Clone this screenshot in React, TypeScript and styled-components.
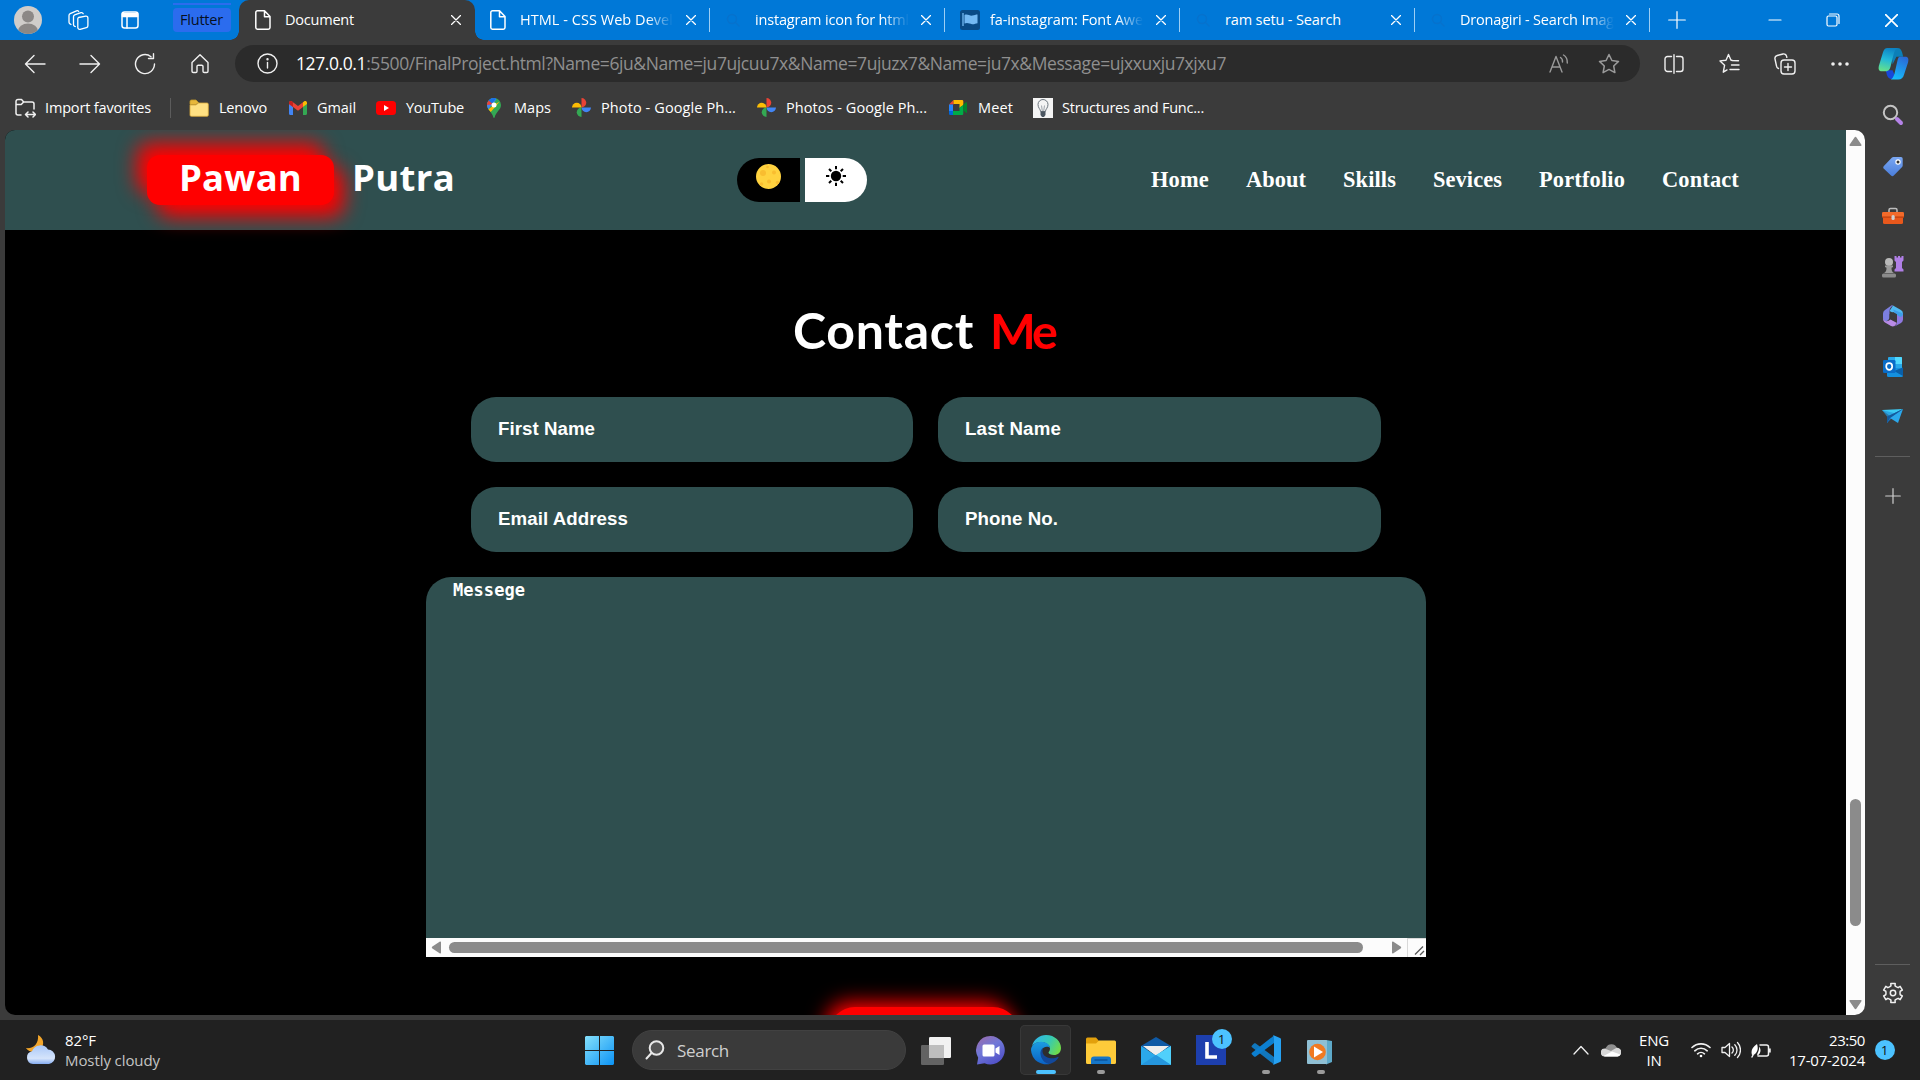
import React, { useLayoutEffect, useRef, useState } from "react";
import styled, { createGlobalStyle, css } from "styled-components";

const UI = `"Open Sans", "Noto Sans", sans-serif`;

const GlobalStyle = createGlobalStyle`
  * { box-sizing: border-box; }
  html, body { margin: 0; padding: 0; background: #3b3b3b; overflow: hidden; }
  svg { display: block; flex: none; }
`;

/* ---------- text fitted to a column width by tracking ---------- */

const FitBox = styled.span<{ $w: number; $size: number; $color?: string; $weight?: number; $font?: string; $ml?: number; $fade?: boolean }>`
  display: block;
  flex: none;
  width: ${(p) => p.$w}px;
  margin-left: ${(p) => p.$ml ?? 0}px;
  font-family: ${(p) => p.$font ?? UI};
  font-size: ${(p) => p.$size}px;
  font-weight: ${(p) => p.$weight ?? 400};
  color: ${(p) => p.$color ?? "#fff"};
  line-height: 20px;
  white-space: nowrap;
  ${(p) =>
    p.$fade &&
    css`
      mask-image: linear-gradient(to right, #000 calc(100% - 26px), transparent);
    `}
`;

type FitProps = {
  text: string;
  w: number;
  size: number;
  color?: string;
  weight?: number;
  font?: string;
  ml?: number;
  fade?: boolean;
  children?: React.ReactNode;
};

function Fit({ text, w, size, color, weight, font, ml, fade, children }: FitProps) {
  const ref = useRef<HTMLSpanElement>(null);
  const [tracking, setTracking] = useState(0);
  useLayoutEffect(() => {
    if (ref.current) {
      const natural = ref.current.getBoundingClientRect().width;
      setTracking((w - natural) / text.length);
    }
  }, [text, w]);
  return (
    <FitBox $w={w} $size={size} $color={color} $weight={weight} $font={font} $ml={ml} $fade={fade}>
      <span ref={ref} style={{ letterSpacing: tracking }}>
        {children ?? text}
      </span>
    </FitBox>
  );
}

/* ---------- shell ---------- */

const Screen = styled.div`
  width: 1920px;
  height: 1080px;
  display: flex;
  flex-direction: column;
  background: #3b3b3b;
  overflow: hidden;
  font-family: ${UI};
  color: #fff;
`;

const Slot = styled.div<{ $w: number }>`
  flex: none;
  width: ${(p) => p.$w}px;
  height: 100%;
  display: flex;
  align-items: center;
  justify-content: center;
`;

/* ---------- tab strip ---------- */

const TabStrip = styled.div`
  height: 40px;
  flex: none;
  display: flex;
  align-items: center;
  background: #0078d7;
`;

const GroupPill = styled.div`
  width: 58px;
  height: 29px;
  margin: 0 8px 5px 13px;
  border-top: 2px solid #2b6cee;
  display: flex;
  align-items: flex-end;
`;

const GroupLabel = styled.div`
  width: 58px;
  height: 24px;
  border-radius: 4px;
  background: #2b6cee;
  padding-left: 7px;
  display: flex;
  align-items: center;
`;

const Tab = styled.div<{ $active?: boolean; $line?: boolean }>`
  width: 235px;
  height: 40px;
  flex: none;
  display: flex;
  align-items: center;
  padding-left: 15px;
  position: relative;
  ${(p) =>
    p.$line &&
    css`
      background: linear-gradient(#9ccef5, #9ccef5) right center / 1px 24px no-repeat;
    `}
  ${(p) =>
    p.$active &&
    css`
      width: 236px;
      padding-left: 16px;
      background: #3b3b3b;
      border-radius: 10px 10px 0 0;
      z-index: 1;
      &::before,
      &::after {
        content: "";
        position: absolute;
        bottom: 0;
        width: 9px;
        height: 9px;
      }
      &::before {
        left: -9px;
        background: radial-gradient(circle at 0 0, transparent 8.5px, #3b3b3b 9px);
      }
      &::after {
        right: -9px;
        background: radial-gradient(circle at 100% 0, transparent 8.5px, #3b3b3b 9px);
      }
    `}
`;

const Favicon = styled.div`
  width: 20px;
  flex: none;
`;

const TabClose = styled.div`
  margin-left: auto;
  margin-right: 14px;
`;

const Spacer = styled.div`
  flex: 1;
`;

const X = ({ s = 10, c = "#fff" }) => (
  <svg width={s} height={s} viewBox="0 0 10 10" stroke={c} strokeWidth="1.3" strokeLinecap="round">
    <path d="M.5.5l9 9M9.5.5l-9 9" />
  </svg>
);

const PageIcon = () => (
  <svg width="16" height="20" viewBox="0 0 16 20" fill="none" stroke="#fff" strokeWidth="1.5" strokeLinejoin="round">
    <path d="M2.5.8h7L15 6.500V17.500a1.700 1.700 0 0 1-1.700 1.700H2.500A1.700 1.700 0 0 1 .8 17.500v-15A1.700 1.700 0 0 1 2.500.8zM9.500 1v5.700H15" />
  </svg>
);

const FaintSearch = () => (
  <svg width="16" height="16" viewBox="0 0 16 16" fill="none" stroke="#0672cd" strokeWidth="1.4">
    <circle cx="7" cy="7" r="4.500" />
    <path d="M10.500 10.500l4 4" />
  </svg>
);

const FlagIcon = () => (
  <svg width="20" height="20" viewBox="0 0 20 20">
    <rect width="20" height="20" rx="2.500" fill="#0a4a86" />
    <path d="M3 3v13" stroke="#74b8f3" strokeWidth="1.300" />
    <path d="M4.500 5c3-1.500 5 1.200 8 .6 2-.3 3-1 5-1v8.600c-2 .2-3 1.200-5.500 1-2.500-.4-4.500-2-7.500-.6z" fill="#74b8f3" />
  </svg>
);

/* ---------- toolbar ---------- */

const Toolbar = styled.div`
  height: 47px;
  flex: none;
  display: flex;
  align-items: center;
  padding-left: 7px;
`;

const Address = styled.div`
  width: 1405px;
  height: 37px;
  margin: 0 6px 0 8px;
  border-radius: 19px;
  background: #2b2b2b;
  display: flex;
  align-items: center;
  padding-left: 22px;
`;

const AddressText = styled.div`
  margin-left: 18px;
  padding-bottom: 2px;
`;

const Host = styled.span`
  color: #fff;
`;

const Line = ({ w = 22, h = 22, d, c = "#f0f0f0", sw = 1.4, children }: any) => (
  <svg width={w} height={h} viewBox={`0 0 ${w} ${h}`} fill="none" stroke={c} strokeWidth={sw} strokeLinecap="round" strokeLinejoin="round">
    {d && <path d={d} />}
    {children}
  </svg>
);

const CopilotIcon = () => (
  <svg width="31" height="33" viewBox="0 0 32 34">
    <defs>
      <linearGradient id="cpA" x1="0.600" y1="0" x2="0.400" y2="1">
        <stop offset="0" stopColor="#0c82c4" />
        <stop offset=".5" stopColor="#22b8d8" />
        <stop offset="1" stopColor="#64e08c" />
      </linearGradient>
      <linearGradient id="cpB" x1="0.700" y1="0" x2="0.300" y2="1">
        <stop offset="0" stopColor="#2a6ad8" />
        <stop offset="1" stopColor="#16bdfb" />
      </linearGradient>
    </defs>
    <path d="M14 1h6c3 0 4 2 5 5l1 4h-7l-4 8z" fill="#0b7fb8" />
    <path d="M8 24h7l4 9h-4c-4 0-5-2-6-5z" fill="#1748d8" />
    <path d="M10 1h10c-2 1-3 3-4 7l-3 12c-1 4-3 5-6 5H4c-3 0-4-2-3-6L5 6c1-3 2-5 5-5z" fill="url(#cpA)" />
    <path d="M23 10h5c3 0 4 2 3 6l-4 12c-1 4-3 5.500-6 5.500h-8c2-1 3-3 4-6l3-13c.700-3 1-4.500 3-4.500z" fill="url(#cpB)" />
  </svg>
);

/* ---------- bookmarks ---------- */

const MainRow = styled.div`
  display: flex;
  height: 933px;
  flex: none;
`;

const LeftColumn = styled.div`
  width: 1865px;
  display: flex;
  flex-direction: column;
  padding-left: 5px;
`;

const Bookmarks = styled.div`
  height: 43px;
  flex: none;
  display: flex;
  align-items: center;
  padding: 0 0 2px 10px;
`;

const Mark = styled.div<{ $w: number }>`
  width: ${(p) => p.$w}px;
  flex: none;
  display: flex;
  align-items: center;
`;

const MarkIcon = styled.div<{ $w: number }>`
  width: ${(p) => p.$w}px;
  flex: none;
`;

const Divider = styled.div`
  width: 1px;
  height: 20px;
  background: #5c5c5c;
  margin-right: 18px;
`;

const ImportIcon = () => (
  <Line w={21} h={20} sw={1.500}>
    <path d="M6 17H3a2 2 0 0 1-2-2V3.500A2 2 0 0 1 3 1.500h3.500l2.200 2.500H17a2 2 0 0 1 2 2V11M1.200 6.500h5l2.200-2.300" />
    <path d="M11 16.500h9M13 14l-2.500 2.500L13 19M18 14l2.500 2.500L18 19" />
  </Line>
);

const FolderSmall = () => (
  <svg width="20" height="18" viewBox="0 0 20 18">
    <path d="M1 2.500A1.500 1.500 0 0 1 2.500 1H7l2.500 2.500-2.500 2H1z" fill="#e8b73a" stroke="#c49a2a" strokeWidth=".8" />
    <path d="M1 6h6l2.500-2H18a1.300 1.300 0 0 1 1.300 1.300V16a1.300 1.300 0 0 1-1.300 1.300H2.300A1.300 1.300 0 0 1 1 16z" fill="#ffe082" stroke="#d9a93b" strokeWidth=".8" />
  </svg>
);

const GmailIcon = () => (
  <svg width="18" height="14" viewBox="0 0 18 14">
    <path d="M0 2.500v10.300c0 .7.500 1.200 1.200 1.200H4V6z" fill="#4285f4" />
    <path d="M18 2.500v10.300c0 .7-.5 1.200-1.200 1.200H14V6z" fill="#34a853" />
    <path d="M14 1.200V6l4-3V1.800C18 .2 16.200-.5 15 .4z" fill="#fbbc04" />
    <path d="M0 1.800V3l4 3 5 3.700L14 6V1.200L9 5 4 1.200 3 .4C1.800-.5 0 .2 0 1.800z" fill="#ea4335" />
    <path d="M0 1.800V3l4 3V1.200L3 .4C1.800-.5 0 .2 0 1.800z" fill="#c5221f" />
  </svg>
);

const YouTubeIcon = () => (
  <svg width="20" height="14" viewBox="0 0 20 14">
    <rect width="20" height="14" rx="3.500" fill="#f00" />
    <path d="M8 4l5 3-5 3z" fill="#fff" />
  </svg>
);

const MapsIcon = () => (
  <svg width="14" height="20" viewBox="0 0 14 20">
    <path d="M7 0a7 7 0 0 0-7 7c0 5 5 6.500 6.300 12.300.2.900 1.200.900 1.400 0C9 13.500 14 12 14 7a7 7 0 0 0-7-7z" fill="#34a853" />
    <path d="M0 7a7 7 0 0 0 1.400 4.200L9.500 1.200 7 0a7 7 0 0 0-7 7z" fill="#4285f4" />
    <path d="M1.700 2.500A7 7 0 0 0 0 7l4.500-.5L6 4z" fill="#ea4335" />
    <path d="M1.400 11.200C2.200 12.300 3 13 3.800 14l8.700-10.300L10 5z" fill="#fbbc04" />
    <path d="M1.700 2.500L5 5.500 9.300.4A7 7 0 0 0 1.700 2.500z" fill="#1a73e8" />
    <circle cx="7" cy="7" r="2.500" fill="#fff" />
  </svg>
);

const PhotosIcon = () => (
  <svg width="19" height="19" viewBox="0 0 18 18">
    <path d="M9 0a4.500 4.500 0 0 1 0 9z" fill="#ea4335" />
    <path d="M18 9a4.500 4.500 0 0 1-9 0z" fill="#4285f4" />
    <path d="M9 18a4.500 4.500 0 0 1 0-9z" fill="#34a853" />
    <path d="M0 9a4.500 4.500 0 0 1 9 0z" fill="#fbbc04" />
  </svg>
);

const MeetIcon = () => (
  <svg width="18" height="15" viewBox="0 0 18 15">
    <path d="M0 4.500L4.500 0v4.500z" fill="#ea4335" />
    <path d="M0 4.500h4v6.500H0z" fill="#2684fc" />
    <path d="M0 11h4v4H1.300A1.300 1.300 0 0 1 0 13.700z" fill="#0066da" />
    <path d="M4.500 0H13a1.300 1.300 0 0 1 1.300 1.300V5L10.500 8V4h-6z" fill="#ffba00" />
    <path d="M4 11h6.500V7.500l3.800-2.500v8.700A1.300 1.300 0 0 1 13 15H4z" fill="#00ac47" />
    <path d="M14.300 4.500L17 2.300c.5-.4 1 0 1 .4v9.600c0 .5-.5.800-1 .4l-2.700-2.200z" fill="#00832d" />
  </svg>
);

const BulbIcon = () => (
  <svg width="20" height="20" viewBox="0 0 20 20">
    <rect width="20" height="20" fill="#f4f4f4" />
    <path d="M7.600 13.500c-.2-2.500-2.600-3.500-2.600-7a5 5 0 0 1 10 0c0 3.500-2.400 4.500-2.600 7z" fill="none" stroke="#6b747d" strokeWidth="1" />
    <path d="M8.500 7.500L9.300 13M11.500 7.500L10.700 13" fill="none" stroke="#8a929a" strokeWidth=".8" />
    <path d="M7.500 13.500h5v3.500L11 19H9l-1.500-2z" fill="#4a5560" />
  </svg>
);

/* ---------- web page ---------- */

const Viewport = styled.div`
  height: 885px;
  flex: none;
  display: flex;
  border-radius: 10px;
  overflow: hidden;
  background: #000;
`;

const Site = styled.div`
  width: 1841px;
  flex: none;
  display: flex;
  flex-direction: column;
  overflow: hidden;
`;

const SiteHeader = styled.header`
  height: 100px;
  flex: none;
  background: #2f4f4f;
  display: flex;
  align-items: flex-start;
  padding-left: 142px;
`;

const LogoBadge = styled.div`
  width: 187px;
  height: 50px;
  margin-top: 25px;
  border-radius: 13px;
  background: #f00;
  box-shadow: -10px -12px 20px #f00, 10px 12px 20px #f00;
  padding: 12px 0 0 32px;
`;

const LogoRest = styled.div`
  width: 103px;
  padding-top: 37px;
  margin-left: 18px;
`;

const Toggle = styled.div`
  display: flex;
  gap: 5px;
  margin: 28px 0 0 282px;
`;

const ToggleHalf = styled.div<{ $light?: boolean }>`
  width: ${(p) => (p.$light ? 62 : 63)}px;
  height: 44px;
  display: flex;
  justify-content: center;
  padding-top: ${(p) => (p.$light ? 8 : 6)}px;
  background: ${(p) => (p.$light ? "#fff" : "#000")};
  border-radius: ${(p) => (p.$light ? "0 22px 22px 0" : "22px 0 0 22px")};
`;

const Nav = styled.nav`
  display: flex;
  margin: 40px 0 0 284px;
`;

const Section = styled.section`
  width: 1000px;
  margin-left: 421px;
  display: flex;
  flex-direction: column;
`;

const Heading = styled.h1`
  margin: 70px 0 0 367px;
  height: 97px;
  display: flex;
  align-items: flex-start;
  padding-top: 20px;
`;

const Fields = styled.div`
  display: grid;
  grid-template-columns: 442px 443px;
  gap: 25px;
  margin-left: 45px;
`;

const Field = styled.div`
  height: 65px;
  border-radius: 25px;
  background: #2f4f4f;
  padding: 22px 0 0 27px;
`;

const MessageBox = styled.div`
  height: 380px;
  margin-top: 25px;
  display: flex;
  flex-direction: column;
  background: #2f4f4f;
  border-radius: 25px 25px 0 0;
`;

const MessageBody = styled.div`
  height: 361px;
  padding: 3px 0 0 27px;
`;

const HScroll = styled.div`
  height: 19px;
  display: flex;
  align-items: center;
  background: #fcfcfc;
  padding-left: 4px;
`;

const HThumb = styled.div`
  width: 914px;
  height: 11px;
  border-radius: 6px;
  background: #8b8b8b;
  margin: 0 27px 0 6px;
`;

const Resizer = styled.div`
  width: 19px;
  height: 19px;
  margin-left: auto;
  border-left: 1px solid #d9d9d9;
  border-top: 1px solid #d9d9d9;
  display: flex;
  align-items: flex-end;
  justify-content: flex-end;
  padding: 0 1px 1px 0;
`;

const Submit = styled.div`
  width: 190px;
  height: 60px;
  margin: 50px 0 0 403px;
  border-radius: 26px;
  background: #f00;
  box-shadow: -6px -8px 20px -3px #f00, 6px 10px 20px -3px #f00;
`;

const VScroll = styled.div`
  width: 19px;
  flex: none;
  background: #fcfcfc;
  display: flex;
  flex-direction: column;
  align-items: center;
  justify-content: space-between;
  padding: 5px 0 4px;
`;

const VThumb = styled.div`
  width: 11px;
  height: 127px;
  border-radius: 6px;
  background: #8b8b8b;
  margin-top: 579px;
`;

const Arrow = ({ r }: { r: number }) => (
  <svg width="13" height="13" viewBox="0 0 13 13">
    <path transform={`rotate(${r} 6.500 6.500)`} d="M6.500 1.800c.4 0 .7.200 1 .6l4.800 7.200c.5.800.2 1.400-.6 1.400H1.300c-.8 0-1.100-.6-.6-1.400l4.800-7.200c.3-.4.600-.6 1-.6z" fill="#8b8b8b" />
  </svg>
);

const Moon = () => (
  <svg width="25" height="25" viewBox="0 0 25 25">
    <circle cx="12.500" cy="12.500" r="12.500" fill="#ffd23f" />
    <g fill="#f9bd30">
      <circle cx="7" cy="9" r="3" />
      <circle cx="18" cy="8.500" r="2" />
      <circle cx="13" cy="17.500" r="2" />
      <circle cx="11.500" cy="3" r="1.300" />
      <circle cx="5.500" cy="20" r="1.800" />
      <circle cx="21.500" cy="18.500" r="1.800" />
    </g>
  </svg>
);

const Sun = () => (
  <svg width="20" height="20" viewBox="0 0 20 20" stroke="#000" strokeWidth="2">
    <circle cx="10" cy="10" r="5.200" stroke="none" />
    <path d="M10 0v3.300M10 16.700V20M0 10h3.300M16.700 10H20M3 3l2.300 2.300M14.700 14.700L17 17M3 17l2.300-2.300M14.700 5.300L17 3" />
  </svg>
);

/* ---------- sidebar ---------- */

const Sidebar = styled.aside`
  width: 55px;
  display: flex;
  flex-direction: column;
  align-items: center;
`;

const SideItem = styled.div<{ $h: number }>`
  width: 100%;
  height: ${(p) => p.$h}px;
  flex: none;
  display: flex;
  align-items: center;
  justify-content: center;
`;

const SideLine = styled.div<{ $mt?: number }>`
  width: 35px;
  height: 1px;
  flex: none;
  background: #5e5e5e;
  margin-top: ${(p) => p.$mt ?? 0}px;
`;

const SideSearch = () => (
  <svg width="22" height="22" viewBox="0 0 22 22" fill="none">
    <circle cx="8.500" cy="8.500" r="6.700" stroke="#c4c4c4" strokeWidth="2" />
    <path d="M15 15l4 4" stroke="#b583e8" strokeWidth="4" strokeLinecap="round" />
  </svg>
);
const TagIcon = () => (
  <svg width="20" height="21" viewBox="0 0 20 21">
    <defs>
      <linearGradient id="tg" x1="0" y1="0" x2="0" y2="1">
        <stop offset="0" stopColor="#7aa7f2" />
        <stop offset="1" stopColor="#4b7edb" />
      </linearGradient>
    </defs>
    <path d="M10.500 1H18a1.700 1.700 0 0 1 1.700 1.700V9.500a2 2 0 0 1-.6 1.400L10.800 19.500a2 2 0 0 1-2.800 0L.9 12.800a2 2 0 0 1 0-2.800L9 1.600A2 2 0 0 1 10.500 1z" fill="url(#tg)" />
    <circle cx="15" cy="6" r="2.700" fill="#fff" />
    <circle cx="15" cy="6" r="1.500" fill="#333" />
  </svg>
);
const ToolsIcon = () => (
  <svg width="22" height="18" viewBox="0 0 22 18">
    <path d="M7 6V3a1.500 1.500 0 0 1 1.500-1.500h5A1.500 1.500 0 0 1 15 3v3" fill="none" stroke="#bdbdbd" strokeWidth="1.500" />
    <path d="M1 9h20v6.500A1.500 1.500 0 0 1 19.500 17h-17A1.500 1.500 0 0 1 1 15.500z" fill="#e8581c" />
    <rect x="0" y="5" width="22" height="5.500" rx="1.200" fill="#f26a2a" />
    <path d="M0 9.500h22v1.200H0z" fill="#b93c0c" />
    <rect x="9.500" y="8" width="3.200" height="5" rx="1.500" fill="#d0d0d0" />
  </svg>
);
const GamesIcon = () => (
  <svg width="22" height="23" viewBox="0 0 22 23">
    <path d="M12.500 1h2v1.500H16V1h2v1.500h1.500V1h2v4.500L20 7v6l1.500 1.500v2h-9v-2L14 13V7l-1.500-1.500z" fill="#b07fe6" />
    <circle cx="7" cy="7" r="4" fill="#b9b9b9" />
    <path d="M3 10.500h8v1.500l-1.500.8c0 3 .6 4.200 2.500 5.200H2c1.900-1 2.500-2.200 2.500-5.200L3 12z" fill="#9b9b9b" />
    <rect x="0" y="18.500" width="14" height="4" rx="1.500" fill="#8b8b8b" />
  </svg>
);
const M365Icon = () => (
  <svg width="20" height="22" viewBox="0 0 20 22">
    <path d="M10 .5l7.500 4.300A4 4 0 0 1 20 8.500V14l-6.500-4.500L6.500 6z" fill="#4fb9f2" />
    <path d="M10 .5c-2.500 1.500-3.500 3.500-3.500 6v6c0 1.500-1.500 3-3.500 4A3.500 3.500 0 0 1 0 13V8.500a4 4 0 0 1 2-3.500L8 .8c.7-.5 1.400-.6 2-.3z" fill="#7c7fe0" />
    <path d="M0 13c.5 3 3.500 4 6 2.500l1.500-1L14 18l-2.500 3c-1.200.7-2.300.6-3.500 0l-6-3.500C.7 16.500 0 15 0 13z" fill="#b98be6" />
    <path d="M20 8.500v6a4 4 0 0 1-2 3.500l-6.500 3.500c2-1.500 2.500-3 2.500-5V9.500c3 .5 5 .8 6-1z" fill="#8f78e0" />
    <path d="M20 8.500c0 2.500-1.500 4-3.500 3L12 8.500l-2-4z" fill="#3d9fe8" />
    <path d="M10.200 7l3.800 2.200v4L10.200 15.500l-3.700-2.200v-4z" fill="#3b3b3b" />
  </svg>
);
const OutlookIcon = () => (
  <svg width="20" height="20" viewBox="0 0 20 20">
    <rect x="5" y="0" width="14" height="13" rx="1" fill="#28a8ea" />
    <path d="M12 0h6a1 1 0 0 1 1 1v6h-7z" fill="#50d9ff" />
    <path d="M4 11h16v7.500a1.500 1.500 0 0 1-1.500 1.500h-13A1.500 1.500 0 0 1 4 18.500z" fill="#1490df" />
    <path d="M20 10.500V19L11 14z" fill="#0a5fa8" />
    <rect x="0" y="3" width="12.500" height="13" rx="1.300" fill="#0a6cc8" />
    <ellipse cx="6.200" cy="9.500" rx="3" ry="3.300" fill="none" stroke="#fff" strokeWidth="1.700" />
  </svg>
);
const DropIcon = () => (
  <svg width="22" height="16" viewBox="0 0 22 16">
    <path d="M0 2l21-1-13 7z" fill="#3ccbf4" />
    <path d="M21 1L5 9v6l4-4z" fill="#1769b8" />
    <path d="M21 1l-5 14-8-5z" fill="#2ba8ec" />
    <path d="M5 15V8.500L0 2l12 3z" fill="#2397dd" opacity=".7" />
    <path d="M5 8.500L21 1 8 10l-3 5z" fill="#155a9c" />
  </svg>
);
const GearIcon = () => {
  const pts: string[] = [];
  for (let i = 0; i < 6; i++) {
    [[-30, 7], [-16, 7.4], [-13, 9.8], [13, 9.8], [16, 7.4]].forEach(([a, r]) => {
      const t = ((i * 60 + a - 90) * Math.PI) / 180;
      pts.push(`${(11 + r * Math.cos(t)).toFixed(2)} ${(11 + r * Math.sin(t)).toFixed(2)}`);
    });
  }
  return (
    <Line w={22} h={22} sw={1.500}>
      <path d={`M${pts.join("L")}Z`} />
      <circle cx="11" cy="11" r="2.700" />
    </Line>
  );
};

/* ---------- taskbar ---------- */

const Taskbar = styled.footer`
  height: 60px;
  flex: none;
  display: flex;
  align-items: center;
  background: #212121;
  padding-left: 26px;
`;

const Stack = styled.div<{ $w: number; $end?: boolean; $center?: boolean; $ml?: number }>`
  width: ${(p) => p.$w}px;
  flex: none;
  margin-left: ${(p) => p.$ml ?? 0}px;
  display: flex;
  flex-direction: column;
  align-items: ${(p) => (p.$end ? "flex-end" : p.$center ? "center" : "flex-start")};
`;

const StartSlot = styled.div`
  margin-left: 426px;
  width: 47px;
`;

const SearchPill = styled.div`
  width: 274px;
  height: 40px;
  border-radius: 20px;
  background: #3a3a3a;
  border: 1px solid #414141;
  display: flex;
  align-items: center;
  padding-left: 12px;
  margin-right: 2px;
`;

const SearchLabel = styled.div`
  margin-left: 12px;
  padding-top: 2px;
`;

const AppButton = styled.div<{ $active?: boolean; $run?: boolean }>`
  width: 51px;
  height: 50px;
  margin: 0 2px;
  flex: none;
  border-radius: 5px;
  display: flex;
  flex-direction: column;
  align-items: center;
  justify-content: flex-end;
  ${(p) => p.$active && "background: #2d2d2d; box-shadow: inset 0 0 0 1px #383838;"}
  &::after {
    content: "";
    width: ${(p) => (p.$active ? 20 : 8)}px;
    height: 4px;
    margin-top: 5px;
    margin-bottom: 1px;
    border-radius: 2px;
    background: ${(p) => (p.$active ? "#4cc2ff" : p.$run ? "#9a9a9a" : "transparent")};
  }
`;

const BadgeHost = styled.div`
  position: relative;
`;

const Badge = styled.div<{ $float?: boolean }>`
  width: 20px;
  height: 20px;
  border-radius: 50%;
  background: #4cc2ff;
  color: #111;
  font-size: 13.5px;
  line-height: 20px;
  text-align: center;
  ${(p) => p.$float && "position: absolute; left: 16px; top: -6px;"}
`;

const Tray = styled.div`
  margin-left: auto;
  width: 347px;
  height: 100%;
  display: flex;
  align-items: center;
`;

const WeatherIcon = () => (
  <svg width="30" height="30" viewBox="0 0 30 30">
    <defs>
      <linearGradient id="wc" x1="0" y1="0" x2="0" y2="1">
        <stop offset="0" stopColor="#a9c8f8" />
        <stop offset=".7" stopColor="#d5e4fb" />
        <stop offset="1" stopColor="#85acf0" />
      </linearGradient>
    </defs>
    <path d="M12 0c6 3 7 10 2 15-4 3-11 3-14-2 7 1 13-4 12-13z" fill="#f3a62b" />
    <path d="M7 29a6.500 6.500 0 0 1-1-12.800A9 9 0 0 1 22 14.500 7.300 7.300 0 0 1 23 29z" fill="url(#wc)" />
  </svg>
);
const WindowsIcon = () => (
  <svg width="29" height="29" viewBox="0 0 29 29">
    <defs>
      <linearGradient id="wn" gradientUnits="userSpaceOnUse" x1="0" y1="0" x2="29" y2="29">
        <stop offset="0" stopColor="#85e0fb" />
        <stop offset="1" stopColor="#0c93f5" />
      </linearGradient>
    </defs>
    <path d="M1 0h13v14H0V1zM15 0h13l1 1v13H15zM0 15h14v14H1l-1-1zM15 15h14v13l-1 1H15z" fill="url(#wn)" />
  </svg>
);
const TaskViewIcon = () => (
  <svg width="30" height="28" viewBox="0 0 30 28">
    <rect x="0" y="8" width="23" height="20" rx="1.200" fill="#636363" />
    <rect x="8" y="0" width="22" height="21" rx="1.200" fill="#f1f1f1" />
    <path d="M8 8h15v13H8z" fill="#bdbdbd" />
  </svg>
);
const ChatIcon = () => (
  <svg width="29" height="29" viewBox="0 0 29 29">
    <defs>
      <linearGradient id="ch" x1="0" y1="0" x2=".6" y2="1">
        <stop offset="0" stopColor="#a06aa8" />
        <stop offset=".5" stopColor="#7078d8" />
        <stop offset="1" stopColor="#5252c8" />
      </linearGradient>
    </defs>
    <path d="M14.500 0a14.300 14.300 0 1 1-6 27.300L1 28.500l1.200-6.800A14.300 14.300 0 0 1 14.500 0z" fill="url(#ch)" />
    <rect x="6.500" y="8.500" width="12" height="12" rx="1.500" fill="#fff" />
    <path d="M19.500 12.500l4-2.500v9l-4-2.500z" fill="#fff" />
  </svg>
);
const EdgeIcon = () => (
  <svg width="30" height="30" viewBox="0 0 30 30">
    <defs>
      <linearGradient id="eg" x1="0" y1=".2" x2="1" y2=".6">
        <stop offset="0" stopColor="#2fb5ef" />
        <stop offset=".55" stopColor="#36c9b4" />
        <stop offset="1" stopColor="#6fdc4a" />
      </linearGradient>
      <linearGradient id="eb" x1="0" y1="0" x2="0" y2="1">
        <stop offset="0" stopColor="#1b9de2" />
        <stop offset="1" stopColor="#0b62c4" />
      </linearGradient>
    </defs>
    <path d="M1 11C3 4 8.500 0 15 0c9 0 15 6.500 15 13 0 4.500-3.200 7-7 7-3 0-5.500-1-5.500-2.500 0-.8 1.500-1.300 1.500-4C19 10 15 7 10 7 6 7 3 8.500 1 11z" fill="url(#eg)" />
    <path d="M0 15C0 10 5 6.700 10 6.700c5 0 8.800 2.800 9 6.300-1-1.500-7-2.500-8.800 3C8.500 22 14 29 20 28.500A15 15 0 0 1 0 15z" fill="url(#eb)" />
    <path d="M12 12.800C9 15 8.500 20 11.500 24.500 14 28.500 18 29.500 20 28.500c3-1 6-3.300 7.500-6 .3-.6-.2-.9-.7-.6-2 1-4.300 1.500-6.800 1.300-5-.3-8.500-3.500-8.500-7 0-1.300.2-2.400.5-3.400z" fill="#12489a" />
  </svg>
);
const ExplorerIcon = () => (
  <svg width="30" height="28" viewBox="0 0 30 28">
    <path d="M0 2a1.500 1.500 0 0 1 1.500-1.500H10L13 4v6H0z" fill="#e2a00c" />
    <path d="M0 6.500h10L13 3.500h15.500A1.500 1.500 0 0 1 30 5v20.500a1.500 1.500 0 0 1-1.500 1.500h-27A1.500 1.500 0 0 1 0 25.500z" fill="#fecb3a" />
    <path d="M5 27v-4.500a3 3 0 0 1 3-3h14a3 3 0 0 1 3 3V27z" fill="#1676c8" />
    <path d="M8.500 23h13" stroke="#0c4f94" strokeWidth="1.300" />
  </svg>
);
const MailIcon = () => (
  <svg width="30" height="28" viewBox="0 0 30 28">
    <path d="M0 9L15 0l15 9v4H0z" fill="#0f5aa6" />
    <path d="M2 9h26L15 19z" fill="#eee" />
    <path d="M0 9l15 9.500L30 9v19H0z" fill="#2ba9ea" />
    <path d="M30 9v19L15 18z" fill="#50d0fb" />
    <path d="M0 28h30L15 18z" fill="#2596dd" />
  </svg>
);
const LenovoTile = styled.div`
  width: 30px;
  height: 30px;
  background: #1d3fae;
  display: flex;
  align-items: center;
  justify-content: center;
`;
const LMark = () => (
  <svg width="12" height="17" viewBox="0 0 12 17">
    <path d="M2 0v15h10" fill="none" stroke="#fff" strokeWidth="3.600" />
  </svg>
);
const CodeIcon = () => (
  <svg width="30" height="30" viewBox="0 0 30 30">
    <path d="M1 10.500l2-2c.6-.5 1.300-.4 1.800 0L23 22v7.500L1 12.200c-.6-.5-.6-1.100 0-1.700z" fill="#1177bd" />
    <path d="M1 19.500l2 2c.6.500 1.300.4 1.800 0L23 8V.5L1 17.800c-.6.500-.6 1.100 0 1.700z" fill="#0c7fd0" />
    <path d="M22 0l7 3c.7.300 1 .8 1 1.500v21c0 .7-.3 1.200-1 1.500l-7 3c.8-1 1-2 1-3V3c0-1-.2-2-1-3z" fill="#26a1f2" />
  </svg>
);
const MediaIcon = () => (
  <svg width="27" height="25" viewBox="0 0 27 25">
    <path d="M19 0l6 1v21l-6 2.500z" fill="#5ea9c9" />
    <rect x="0" y="0" width="20" height="24" rx="1" fill="#8fbfd4" />
    <circle cx="10.500" cy="12" r="8.300" fill="#f07a22" />
    <path d="M7 6.500l9 5.500-9 5.500z" fill="#fff" />
  </svg>
);

const NAV: [string, number][] = [["Home", 58], ["About", 60], ["Skills", 53], ["Sevices", 69], ["Portfolio", 86], ["Contact", 77]];
const FIELDS: [string, number][] = [["First Name", 97], ["Last Name", 96], ["Email Address", 130], ["Phone No.", 93]];

export default function App() {
  return (
    <Screen>
      <GlobalStyle />
      <TabStrip>
        <Slot $w={56}>
          <svg width="28" height="28" viewBox="0 0 28 28">
            <clipPath id="av"><circle cx="14" cy="14" r="14" /></clipPath>
            <g clipPath="url(#av)">
              <rect width="28" height="28" fill="#d0cdca" />
              <circle cx="14" cy="10.500" r="6" fill="#8c8886" />
              <ellipse cx="14" cy="25" rx="10" ry="7.500" fill="#8c8886" />
            </g>
          </svg>
        </Slot>
        <Slot $w={43}>
          <Line w={22} h={22} sw={1.300} c="#fff">
            <path d="M11.500 8.500l7.300-1.300a1.800 1.800 0 0 1 2.100 1.800v7.800a1.800 1.800 0 0 1-1.500 1.800l-6.300 1.700a1.800 1.800 0 0 1-2.300-1.700v-8.400a1.800 1.800 0 0 1 .7-1.700z" />
            <path d="M8.300 17.500l-.6-.2A1.800 1.800 0 0 1 6.500 15.500V7.700a2 2 0 0 1 1.200-1.800L14 3.700a1.800 1.800 0 0 1 2.200 1" />
            <path d="M4 15.500l-1-.6a1.800 1.800 0 0 1-1-1.600V6.500a2 2 0 0 1 1.200-1.800L9.500 1.800a1.800 1.800 0 0 1 2.200.7" />
          </Line>
        </Slot>
        <Slot $w={61}>
          <Line w={18} h={18} sw={1.500} c="#fff">
            <rect x="1" y="1" width="16" height="16" rx="2.500" />
            <path d="M1.500 2.500h15v3h-15z" fill="#fff" />
            <path d="M6 6v11" />
          </Line>
        </Slot>
        <GroupPill>
          <GroupLabel><Fit text="Flutter" w={43} size={14.5} color="#06101f" /></GroupLabel>
        </GroupPill>
        <Tab $active>
          <PageIcon /><Fit text="Document" w={69} size={14.5} ml={14} />
          <TabClose><X /></TabClose>
        </Tab>
        <Tab $line>
          <Favicon><PageIcon /></Favicon><Fit text="HTML - CSS Web Devel" w={153} size={14.5} ml={10} fade />
          <TabClose><X /></TabClose>
        </Tab>
        <Tab $line>
          <Favicon><FaintSearch /></Favicon><Fit text="instagram icon for html" w={154} size={14.5} ml={10} fade />
          <TabClose><X /></TabClose>
        </Tab>
        <Tab $line>
          <Favicon><FlagIcon /></Favicon><Fit text="fa-instagram: Font Awe" w={153} size={14.5} ml={10} fade />
          <TabClose><X /></TabClose>
        </Tab>
        <Tab $line>
          <Favicon><FaintSearch /></Favicon><Fit text="ram setu - Search" w={116} size={14.5} ml={10} />
          <TabClose><X /></TabClose>
        </Tab>
        <Tab $line>
          <Favicon><FaintSearch /></Favicon><Fit text="Dronagiri - Search Imag" w={154} size={14.5} ml={10} fade />
          <TabClose><X /></TabClose>
        </Tab>
        <Slot $w={54}><Line w={18} h={18} d="M9 .7v16.600M.7 9h16.600" c="#fff" sw={1.200} /></Slot>
        <Spacer />
        <Slot $w={58}><Line w={14} h={4} d="M1 2h12" c="#fff" sw={1.200} /></Slot>
        <Slot $w={58}>
          <Line w={14} h={14} c="#fff" sw={1.200}>
            <rect x="1" y="3" width="10" height="10" rx="1.500" />
            <path d="M3.500 1H11a2 2 0 0 1 2 2v7.500" />
          </Line>
        </Slot>
        <Slot $w={58}><X s={13} /></Slot>
      </TabStrip>

      <Toolbar>
        <Slot $w={55}><Line w={22} h={20} d="M21 10H1.500M10 1.500L1.500 10l8.500 8.500" /></Slot>
        <Slot $w={55}><Line w={22} h={20} d="M1 10h19.500M12 1.500l8.500 8.500-8.500 8.500" /></Slot>
        <Slot $w={55}><Line w={22} h={22} d="M20.500 11A9.500 9.500 0 1 1 17 3.700M19.500.8V5.500h-5" /></Slot>
        <Slot $w={55}><Line w={20} h={21} d="M2 9.500l8-7.700 8 7.700v8.700a1.300 1.300 0 0 1-1.300 1.300h-2.400A1.300 1.300 0 0 1 13 18.200V13.500a1.300 1.300 0 0 0-1.300-1.300H8.300A1.300 1.300 0 0 0 7 13.500v4.700a1.300 1.300 0 0 1-1.300 1.300H3.300A1.300 1.300 0 0 1 2 18.200z" /></Slot>
        <Address>
          <Line w={21} h={21} sw={1.400}>
            <circle cx="10.500" cy="10.500" r="9.500" /><path d="M10.500 9.500v5.500" /><circle cx="10.500" cy="6.300" r=".5" fill="#fff" />
          </Line>
          <AddressText>
            <Fit
              text="127.0.0.1:5500/FinalProject.html?Name=6ju&Name=ju7ujcuu7x&Name=7ujuzx7&Name=ju7x&Message=ujxxuxju7xjxu7"
              w={930} size={17.5} color="#8f8f8f"
            >
              <Host>127.0.0.1</Host>:5500/FinalProject.html?Name=6ju&amp;Name=ju7ujcuu7x&amp;Name=7ujuzx7&amp;Name=ju7x&amp;Message=ujxxuxju7xjxu7
            </Fit>
          </AddressText>
          <Spacer />
          <Slot $w={46}>
            <Line w={20} h={20} c="#9a9a9a" sw={1.400} d="M1 18L7 2.500 13 18M3 13h8M11.500 3.500c1.500 1 2.200 2.500 2 4.500M14.500 1c2.700 1.500 4 4.500 3.800 8" />
          </Slot>
          <Slot $w={54}>
            <Line w={22} h={22} c="#9a9a9a" sw={1.500} d="M11 1.500l2.900 6 6.600.9-4.800 4.600 1.200 6.600-5.900-3.200-5.900 3.200 1.200-6.600L1.500 8.400l6.600-.9z" />
          </Slot>
          <Slot $w={4} />
        </Address>
        <Slot $w={55}>
          <Line w={20} h={20}><path d="M7.500 2.500h-4a2.500 2.500 0 0 0-2.500 2.500v10a2.500 2.500 0 0 0 2.500 2.500h4M12.500 2.500h4a2.500 2.500 0 0 1 2.500 2.500v10a2.500 2.500 0 0 1-2.500 2.500h-4M10 .8v18.400" /></Line>
        </Slot>
        <Slot $w={56}>
          <Line w={21} h={21}><path d="M13 7.300h-1L9.500 1.500 7 7.300l-6 .6 4.600 4.300-1.300 7 3.700-2.300M13 7.500l6.500.3M12.500 12h7.500M11 16.500h9" /></Line>
        </Slot>
        <Slot $w={55}>
          <Line w={22} h={22}><rect x="7" y="7" width="14" height="14" rx="3" /><path d="M14 10.500v7M10.500 14h7M4.500 15.500A3 3 0 0 1 2.500 13L1 6a3 3 0 0 1 2.200-3.500L9 1a3 3 0 0 1 3.600 2.300L12.800 4.300" /></Line>
        </Slot>
        <Slot $w={55}>
          <svg width="18" height="4" viewBox="0 0 18 4" fill="#f0f0f0"><circle cx="2" cy="2" r="1.800" /><circle cx="9" cy="2" r="1.800" /><circle cx="16" cy="2" r="1.800" /></svg>
        </Slot>
        <Slot $w={52}><CopilotIcon /></Slot>
      </Toolbar>

      <MainRow>
        <LeftColumn>
          <Bookmarks>
            <Mark $w={155}><MarkIcon $w={30}><ImportIcon /></MarkIcon><Fit text="Import favorites" w={106} size={14.5} /></Mark>
            <Divider />
            <Mark $w={100}><MarkIcon $w={30}><FolderSmall /></MarkIcon><Fit text="Lenovo" w={48} size={14.5} /></Mark>
            <Mark $w={87}><MarkIcon $w={28}><GmailIcon /></MarkIcon><Fit text="Gmail" w={39} size={14.5} /></Mark>
            <Mark $w={111}><MarkIcon $w={30}><YouTubeIcon /></MarkIcon><Fit text="YouTube" w={58} size={14.5} /></Mark>
            <Mark $w={85}><MarkIcon $w={27}><MapsIcon /></MarkIcon><Fit text="Maps" w={37} size={14.5} /></Mark>
            <Mark $w={185}><MarkIcon $w={29}><PhotosIcon /></MarkIcon><Fit text="Photo - Google Ph..." w={135} size={14.5} /></Mark>
            <Mark $w={192}><MarkIcon $w={29}><PhotosIcon /></MarkIcon><Fit text="Photos - Google Ph..." w={141} size={14.5} /></Mark>
            <Mark $w={84}><MarkIcon $w={29}><MeetIcon /></MarkIcon><Fit text="Meet" w={35} size={14.5} /></Mark>
            <Mark $w={180}><MarkIcon $w={29}><BulbIcon /></MarkIcon><Fit text="Structures and Func..." w={142} size={14.5} /></Mark>
          </Bookmarks>
          <Viewport>
            <Site>
              <SiteHeader>
                <LogoBadge><Fit text="Pawan" w={123} size={36.5} weight={700} /></LogoBadge>
                <LogoRest><Fit text="Putra" w={103} size={36.5} weight={700} /></LogoRest>
                <Toggle>
                  <ToggleHalf><Moon /></ToggleHalf>
                  <ToggleHalf $light><Sun /></ToggleHalf>
                </Toggle>
                <Nav>
                  {NAV.map(([t, w], i) => (
                    <Fit key={t} text={t} w={w} ml={i ? 37 : 0} size={22.4} weight={700} font={`"Liberation Serif", serif`} />
                  ))}
                </Nav>
              </SiteHeader>
              <Section>
                <Heading>
                  <Fit text="Contact" w={181} size={50} weight={700} font={`Lato, sans-serif`} />
                  <Fit text="Me" w={65} size={48.5} weight={700} ml={16} color="#f00" font={`Lato, sans-serif`} />
                </Heading>
                <Fields>
                  {FIELDS.map(([t, w]) => (
                    <Field key={t}><Fit text={t} w={w} size={18.7} weight={700} font={`"Liberation Sans", sans-serif`} /></Field>
                  ))}
                </Fields>
                <MessageBox>
                  <MessageBody><Fit text="Messege" w={72} size={17} weight={700} font={`"DejaVu Sans Mono", monospace`} /></MessageBody>
                  <HScroll>
                    <Arrow r={-90} />
                    <HThumb />
                    <Arrow r={90} />
                    <Resizer>
                      <svg width="11" height="11" viewBox="0 0 11 11" stroke="#555" strokeWidth="1.300"><path d="M1 9.500L9 1.500M6 10l4-4" /></svg>
                    </Resizer>
                  </HScroll>
                </MessageBox>
                <Submit />
              </Section>
            </Site>
            <VScroll>
              <Arrow r={0} />
              <VThumb />
              <Arrow r={180} />
            </VScroll>
          </Viewport>
        </LeftColumn>
        <Sidebar>
          <SideItem $h={56}><SideSearch /></SideItem>
          <SideItem $h={47}><TagIcon /></SideItem>
          <SideItem $h={52}><ToolsIcon /></SideItem>
          <SideItem $h={48}><GamesIcon /></SideItem>
          <SideItem $h={52}><M365Icon /></SideItem>
          <SideItem $h={49}><OutlookIcon /></SideItem>
          <SideItem $h={50}><DropIcon /></SideItem>
          <SideLine $mt={15} />
          <SideItem $h={78}><Line w={16} h={16} d="M8 .7v14.600M.7 8h14.600" c="#cfcfcf" sw={1.200} /></SideItem>
          <SideLine $mt={429} />
          <SideItem $h={56}><GearIcon /></SideItem>
        </Sidebar>
      </MainRow>

      <Taskbar>
        <WeatherIcon />
        <Stack $w={94} $ml={9}>
          <Fit text="82°F" w={31} size={15} />
          <Fit text="Mostly cloudy" w={95} size={15} color="#c4c4c4" />
        </Stack>
        <StartSlot><WindowsIcon /></StartSlot>
        <SearchPill>
          <svg width="20" height="20" viewBox="0 0 20 20" fill="none" stroke="#e8e8e8" strokeWidth="2"><circle cx="11.500" cy="8" r="6.800" fill="#555" /><path d="M6.500 13L1.500 18.500" strokeLinecap="round" /></svg>
          <SearchLabel><Fit text="Search" w={52} size={17} color="#cfcfcf" /></SearchLabel>
        </SearchPill>
        <AppButton><TaskViewIcon /></AppButton>
        <AppButton><ChatIcon /></AppButton>
        <AppButton $active><EdgeIcon /></AppButton>
        <AppButton $run><ExplorerIcon /></AppButton>
        <AppButton><MailIcon /></AppButton>
        <AppButton><BadgeHost><LenovoTile><LMark /></LenovoTile><Badge $float>1</Badge></BadgeHost></AppButton>
        <AppButton $run><CodeIcon /></AppButton>
        <AppButton $run><MediaIcon /></AppButton>
        <Tray>
          <Line w={16} h={10} d="M1 9l7-7.500L15 9" sw={1.300} />
          <Stack $w={20} $ml={12}>
            <svg width="20" height="14" viewBox="0 0 20 14">
              <path d="M5 4.500A6 6 0 0 1 16 5l-6 4-7-2z" fill="#8f8f8f" />
              <path d="M4 13.500a4 4 0 0 1-.5-8L10 8l5.500-3.200a4.300 4.300 0 0 1 1 8.700z" fill="#d8d8d8" />
              <path d="M2.500 13L11 8.500l8.500 3c-.5 1.200-1.600 2-3 2H4c-.6 0-1-.2-1.500-.5z" fill="#fff" />
            </svg>
          </Stack>
          <Stack $w={30} $ml={18} $center>
            <Fit text="ENG" w={30} size={15} />
            <Fit text="IN" w={15} size={15} />
          </Stack>
          <Stack $w={20} $ml={22}>
            <Line w={20} h={16} sw={1.600}>
              <path d="M1 5.500a13 13 0 0 1 18 0M3.800 8.800a9 9 0 0 1 12.400 0M6.600 11.800a5 5 0 0 1 6.800 0" /><circle cx="10" cy="14" r="1.300" fill="#fff" stroke="none" />
            </Line>
          </Stack>
          <Stack $w={20} $ml={10}>
            <Line w={20} h={18} sw={1.300} d="M1 6.500h3L8.500 2.500v13L4 11.500H1zM11 6a4 4 0 0 1 0 6M13.800 3.700a7.500 7.500 0 0 1 0 10.600M16.500 1.500a11 11 0 0 1 0 15" />
          </Stack>
          <Stack $w={20} $ml={10}>
            <Line w={20} h={15} sw={1.500}>
              <path d="M9 2h6.500A2 2 0 0 1 17.500 4v7a2 2 0 0 1-2 2H7M19 6v3" />
              <path d="M1 12c-1.300-4 0-7.500 5-11 .8 2.500 1 4.500.3 6.500C5.500 10 3.500 12 1 12zM6.500 12.500C5 11 9 8 8 3.500c2 2 2.500 6.500-1.500 9z" fill="#fff" stroke="none" />
              <path d="M1 14l1.500-3" />
            </Line>
          </Stack>
          <Stack $w={76} $ml={18} $end>
            <Fit text="23:50" w={36} size={15} />
            <Fit text="17-07-2024" w={76} size={15} />
          </Stack>
          <Slot $w={39}><Badge>1</Badge></Slot>
        </Tray>
      </Taskbar>
    </Screen>
  );
}
